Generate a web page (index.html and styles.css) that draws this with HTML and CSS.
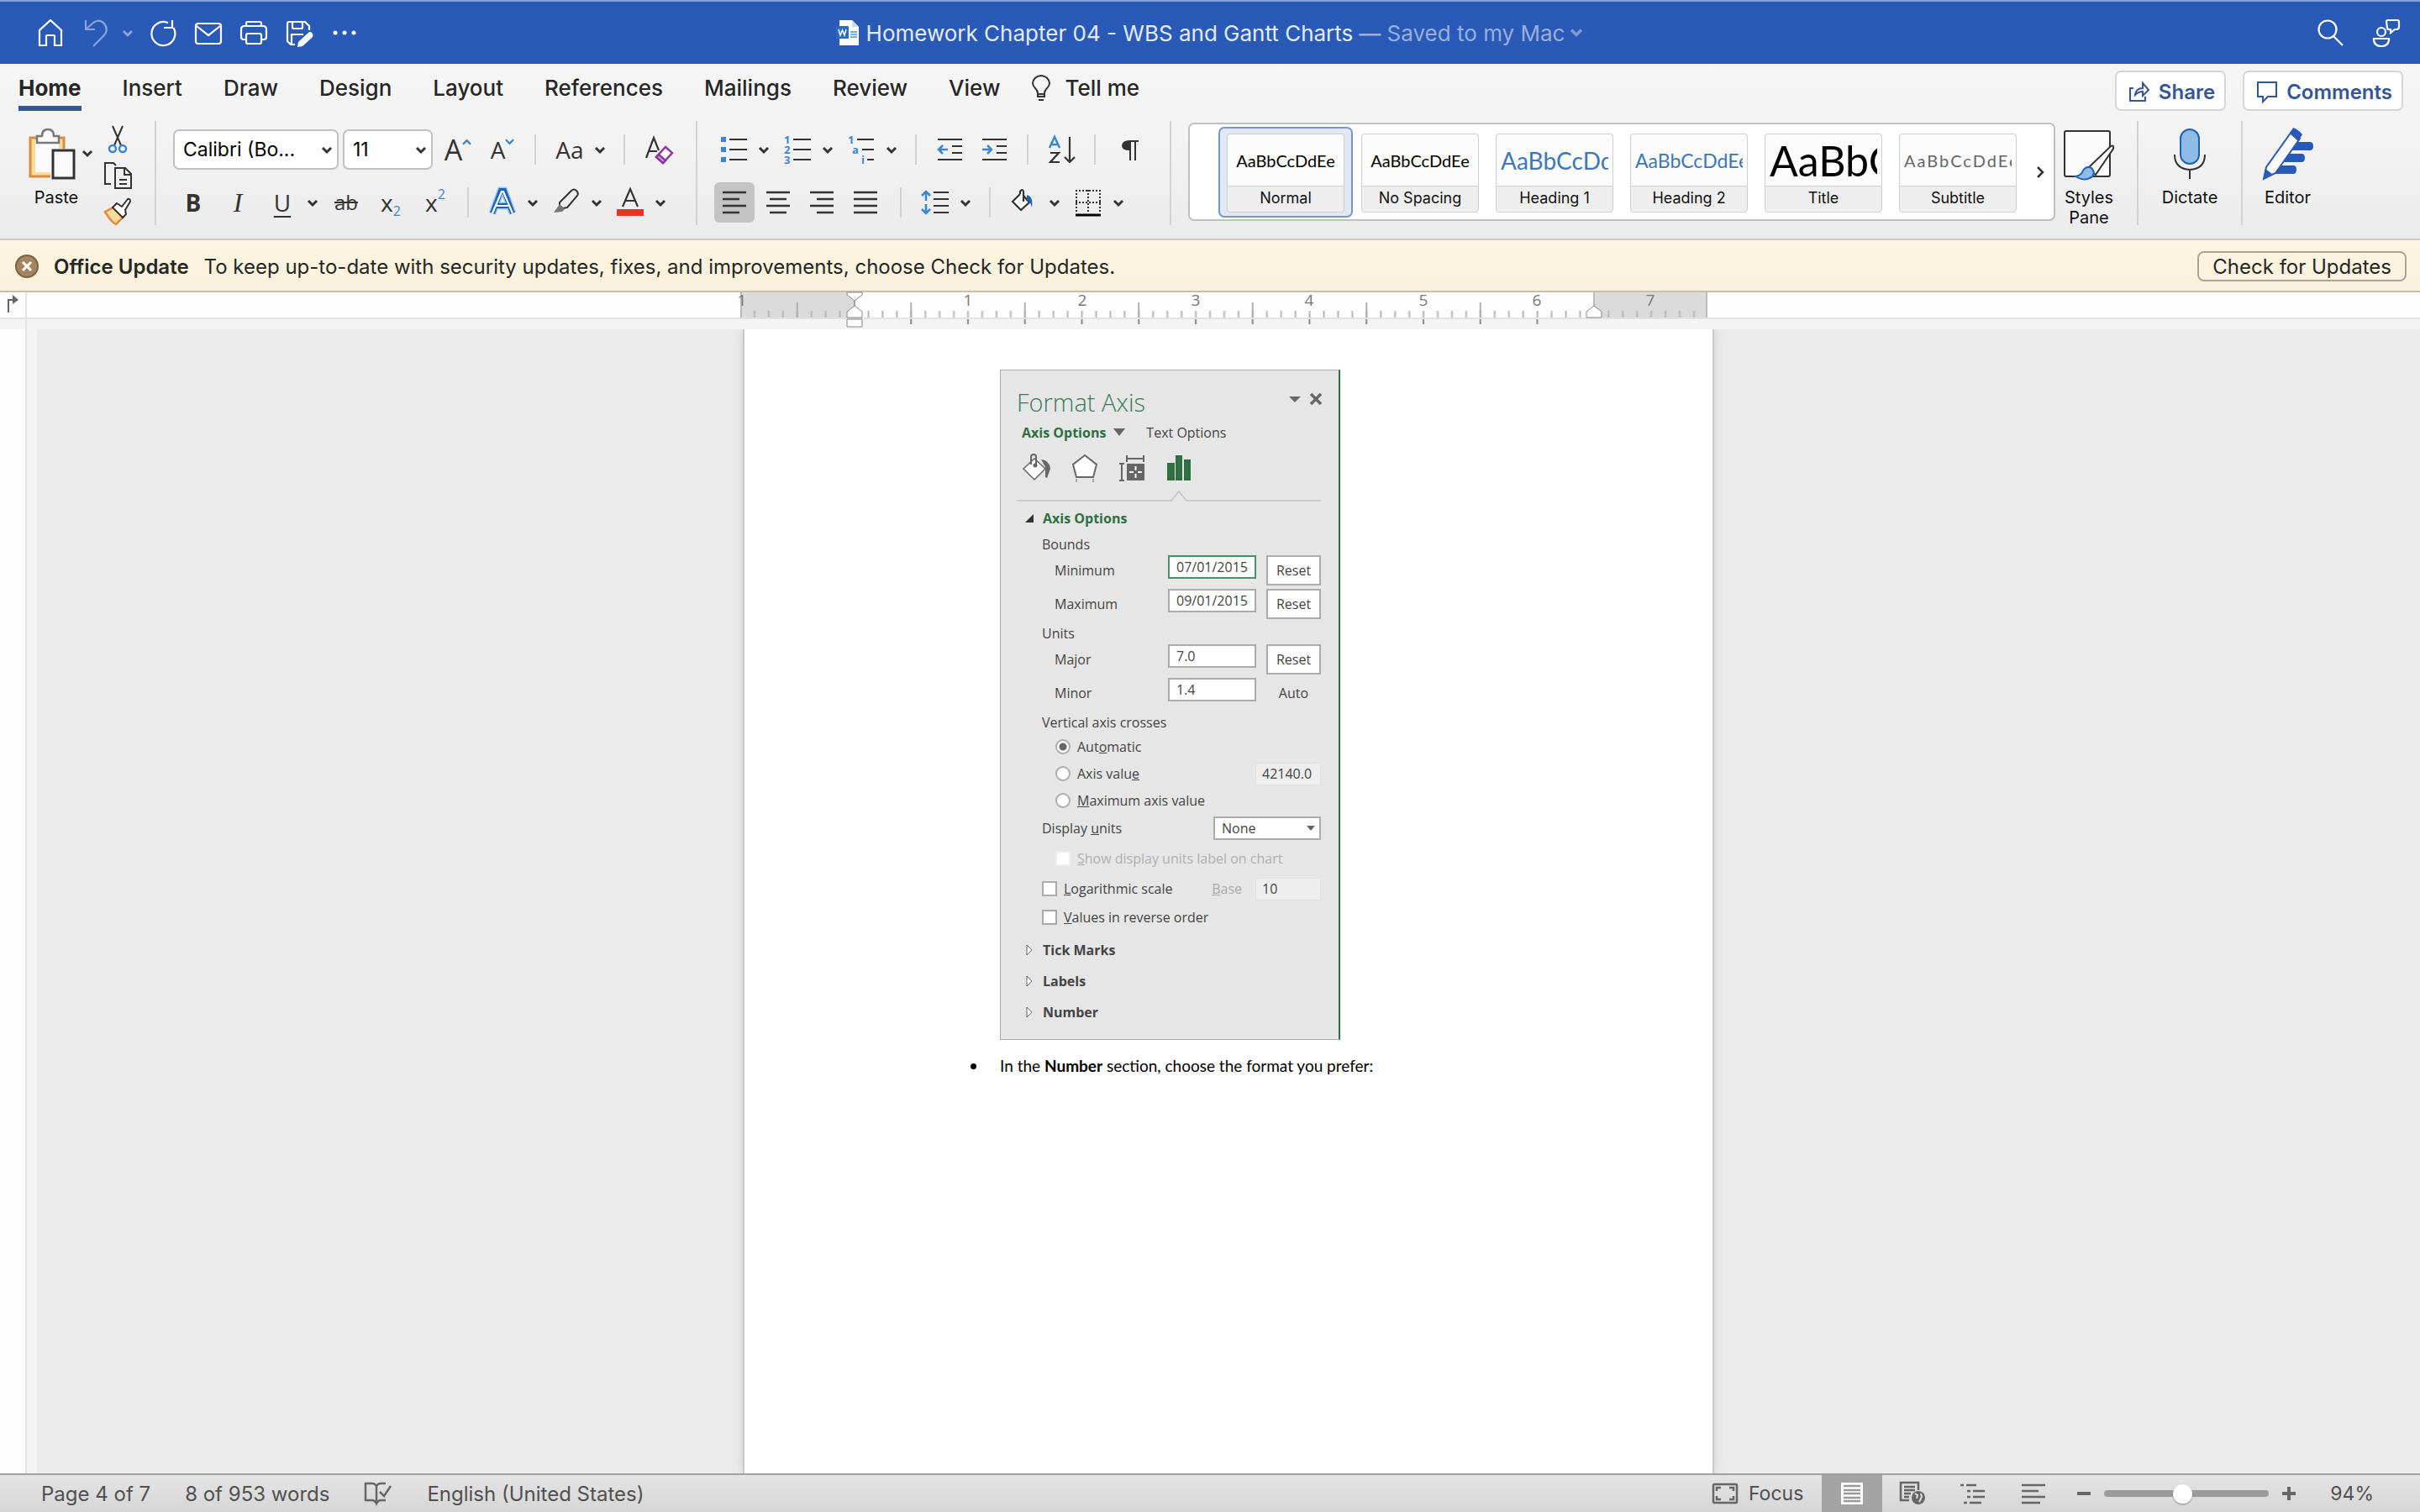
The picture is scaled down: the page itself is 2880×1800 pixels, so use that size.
FILE: index.html
```html
<!DOCTYPE html>
<html lang="en">
<head>
    <meta charset="UTF-8">
    <meta name="viewport" content="width=device-width, initial-scale=1.0">
    <title>Homework Chapter 04 - WBS and Gantt Charts</title>
    <link rel="stylesheet" href="styles.css">
</head>
<body>
    <svg class="defs" aria-hidden="true">
        <symbol id="chev" viewBox="0 0 14 10"><path d="M2 2l5 5 5-5" fill="none" stroke="currentColor" stroke-width="3"/></symbol>
    </svg>

    <header class="titlebar">
        <div class="quick">
            <button aria-label="Home"><svg viewBox="0 0 36 36"><path d="M5 33V15L18 3l13 12v18h-8V22q0-1-1-1h-8q-1 0-1 1v11z"/></svg></button>
            <button class="dim" aria-label="Undo"><svg viewBox="0 0 36 36"><path d="M6 3v11h11M6 14L15 6q7-5 13 1 6 8-1 15L15 34"/></svg></button>
            <button class="chev dim" aria-label="Undo list"><svg><use href="#chev"/></svg></button>
            <button aria-label="Redo"><svg viewBox="0 0 36 36"><path d="M24 6.200A14 14 0 1 0 30.500 12M29 3v9H19"/></svg></button>
            <button aria-label="Mail"><svg viewBox="0 0 36 36"><rect x="3" y="7" width="30" height="24" rx="3"/><path d="M4 10l14 11L32 10"/></svg></button>
            <button aria-label="Print"><svg viewBox="0 0 36 36"><path d="M9 10V7q0-2 2-2h14q2 0 2 2v3M9 26H6q-3 0-3-3v-9q0-4 4-4h22q4 0 4 4v9q0 3-3 3h-3"/><rect x="9" y="19" width="18" height="12" rx="2"/></svg></button>
            <button aria-label="Save"><svg viewBox="0 0 36 36"><path d="M13 32H8l-4-4V7q0-2 2-2h19l5 5v5M10 5v7q0 1 1 1h10q1 0 1-1V5M9 31V20h14"/><path d="M33 18q3 3 0 6L22 34l-6 1 1-6 12-11q2-2 4 0z" fill="#fff" stroke="none"/></svg></button>
            <button aria-label="More"><svg viewBox="0 0 36 36"><g fill="#fff" stroke="none"><circle cx="7" cy="18" r="2.500"/><circle cx="18" cy="18" r="2.500"/><circle cx="29" cy="18" r="2.500"/></g></svg></button>
        </div>
        <div class="doc-title">
            <svg class="doc-icon" viewBox="0 0 28 32"><path d="M4 1h15l8 8v22H4z" fill="#fff"/><path d="M19 1l8 8h-8z" fill="#d5dbe4"/><path d="M17 15h8M17 18h8M17 21h8" stroke="#4a8fd8" stroke-width="1.500"/><rect y="8" width="15" height="15" rx="1" fill="#2b6bc4"/><path d="M3 12l2 7 2.500-6 2.500 6 2-7" fill="none" stroke="#fff" stroke-width="1.500"/></svg>
            <span>Homework Chapter 04 - WBS and Gantt Charts</span>
            <span class="saved"><b>—</b> Saved to my Mac</span>
            <svg class="dim title-chev"><use href="#chev"/></svg>
        </div>
        <div class="account">
            <button aria-label="Search"><svg viewBox="0 0 36 36"><circle cx="15" cy="14" r="10.500"/><path d="M22 22l11 11"/></svg></button>
            <button aria-label="Presence"><svg viewBox="0 0 36 36"><circle cx="13" cy="17" r="5"/><path d="M4 25h18v2q-1 7-9 7t-9-7zM19 5q0-2 2-2h11q2 0 2 2v6q0 3-3 3h-2l-5 4v-4h-2q-2 0-2-2z"/></svg></button>
        </div>
    </header>

    <div class="ribbon">
        <nav class="tabs">
            <a href="#" class="active">Home</a>
            <a href="#">Insert</a>
            <a href="#">Draw</a>
            <a href="#">Design</a>
            <a href="#">Layout</a>
            <a href="#">References</a>
            <a href="#">Mailings</a>
            <a href="#">Review</a>
            <a href="#">View</a>
            <a href="#" class="tell"><svg viewBox="0 0 24 32"><path d="M8 22q0-3-3-6-3-3-3-6 1-8 10-9 9 1 10 9 0 3-3 6-3 3-3 6v4H8zM8 23h8M9 30h6" fill="none" stroke="#333" stroke-width="2"/></svg>Tell me</a>
            <div class="tab-actions">
                <button><svg viewBox="0 0 26 26"><path d="M6 9H2v15h18v-5M8 17q1-8 9-8V3l7 8-7 7v-5q-5 0-9 4z"/></svg>Share</button>
                <button><svg viewBox="0 0 26 26"><path d="M2 2h22v17H14l-6 6v-6H2z"/></svg>Comments</button>
            </div>
        </nav>

        <div class="tools">
            <div class="clipboard">
                <button class="big paste">
                    <svg viewBox="0 0 60 62"><path d="M5 12h40v46H5z" fill="#f8dc9c" stroke="#e08a3c" stroke-width="3"/><path d="M11 15h28v38H11z" fill="#fafafa"/><path d="M13 10h6q0-8 7-8t7 8h6v8H13z" fill="#fafafa" stroke="#777" stroke-width="2.500"/><path d="M29 25h29v37H29z" fill="#fafafa"/><path d="M32 27h25v33H32z" fill="#fafafa" stroke="#333" stroke-width="3"/></svg>
                    Paste
                </button>
                <button class="chev" aria-label="Paste options"><svg><use href="#chev"/></svg></button>
                <div class="stack">
                    <button aria-label="Cut"><svg viewBox="0 0 36 36"><path d="M12 2l10 23M24 2L14 25" stroke-width="2"/><g stroke="#3b87cd"><circle cx="12" cy="29" r="4"/><circle cx="24" cy="29" r="4"/></g></svg></button>
                    <button aria-label="Copy"><svg viewBox="0 0 36 36"><path d="M10 28H3V3h10l3 3M15 9h12l7 7v17H15zM26 9v8h8M20 23h9M20 28h9" stroke-width="2"/></svg></button>
                    <button aria-label="Format painter"><svg viewBox="0 0 36 36"><path d="M3 18l10-5 12 11-9 9q-6-3-13-15z" fill="#fbdc9a" stroke="#e08a3c"/><path d="M12 13l5-5 6 4 7-9q3-1 3 3l-6 10 1 5-4 4z" fill="#fff" stroke-width="2"/></svg></button>
                </div>
            </div>

            <div class="group font">
                <div class="row">
                    <div class="combos">
                        <div class="combo"><select class="face" aria-label="Font"><option>Calibri (Bo...</option></select><svg><use href="#chev"/></svg></div>
                        <div class="combo"><select class="size" aria-label="Font size"><option>11</option></select><svg><use href="#chev"/></svg></div>
                    </div>
                    <button class="glyph large" aria-label="Increase font size">A<svg class="mini" viewBox="0 0 12 8"><path d="M1 7l5-5 5 5" stroke="#3b87cd"/></svg></button>
                    <button class="glyph" aria-label="Decrease font size">A<svg class="mini" viewBox="0 0 12 8"><path d="M1 1l5 5 5-5" stroke="#3b87cd"/></svg></button>
                    <i class="sep"></i>
                    <button class="glyph" aria-label="Change case">Aa</button>
                    <button class="chev" aria-label="Case list"><svg><use href="#chev"/></svg></button>
                    <i class="sep"></i>
                    <button aria-label="Clear formatting"><svg viewBox="0 0 36 36"><path d="M3 28L12 4l6 15M6 20h10" stroke-width="2.200"/><path d="M26 15l8 7-11 12-8-7z" fill="#fff" stroke="#8a3aa0"/><path d="M18 24l8 7-3 3-8-7z" fill="#d9a3e4" stroke="#8a3aa0"/></svg></button>
                </div>
                <div class="row">
                    <button class="glyph bold">B</button>
                    <button class="glyph italic">I</button>
                    <button class="glyph under">U</button>
                    <button class="chev" aria-label="Underline list"><svg><use href="#chev"/></svg></button>
                    <button class="glyph strike">ab</button>
                    <button class="glyph script">x<sub>2</sub></button>
                    <button class="glyph script">x<sup>2</sup></button>
                    <i class="sep"></i>
                    <button aria-label="Text effects"><svg viewBox="0 0 36 36"><path d="M6 31L16 4h4l10 27M11 22h14" stroke="#9cc8ee" stroke-width="9"/><path d="M6 31L16 4h4l10 27M11 22h14" stroke="#1f62b4" stroke-width="6"/><path d="M6 31L17 5h2l11 26M11 22h14" stroke="#fff" stroke-width="2.200"/></svg></button>
                    <button class="chev" aria-label="Text effects list"><svg><use href="#chev"/></svg></button>
                    <button aria-label="Highlight"><svg viewBox="0 0 36 36"><path d="M10 18L24 4q3-3 6 0 3 3 1 6L19 24l-5 1-4-3z" stroke-width="2"/><path d="M10 20l6 6-3 3-10 1z" fill="#777" stroke="none"/></svg></button>
                    <button class="chev" aria-label="Highlight list"><svg><use href="#chev"/></svg></button>
                    <button aria-label="Font color"><svg viewBox="0 0 36 36"><path d="M9 23l9-21 9 21M12 16h12" stroke-width="2.200"/><path d="M2 26h32v8H2z" fill="#eb3223" stroke="none"/></svg></button>
                    <button class="chev" aria-label="Font color list"><svg><use href="#chev"/></svg></button>
                </div>
            </div>

            <div class="group para">
                <div class="row">
                    <button aria-label="Bullets"><svg viewBox="0 0 36 36"><path d="M13 6h21M13 18h21M13 30h21" stroke-width="2.200"/><path d="M3 3h6v6H3zM3 15h6v6H3zM3 27h6v6H3z" fill="#3b87cd" stroke="none"/></svg></button>
                    <button class="chev" aria-label="Bullets list"><svg><use href="#chev"/></svg></button>
                    <button aria-label="Numbering"><svg viewBox="0 0 36 36"><path d="M13 6h21M13 18h21M13 30h21" stroke-width="2.200"/><g class="num"><text x="2" y="11">1</text><text x="2" y="23">2</text><text x="2" y="35">3</text></g></svg></button>
                    <button class="chev" aria-label="Numbering list"><svg><use href="#chev"/></svg></button>
                    <button aria-label="Multilevel list"><svg viewBox="0 0 36 36"><path d="M13 6h20M19 18h14M25 30h8" stroke-width="2.200"/><g class="num"><text x="2" y="11">1</text><text x="7" y="23">a</text><text x="18" y="35">i</text></g></svg></button>
                    <button class="chev" aria-label="Multilevel styles"><svg><use href="#chev"/></svg></button>
                    <i class="sep"></i>
                    <button aria-label="Decrease indent"><svg viewBox="0 0 36 36"><path d="M3 6h29M20 14h12M20 22h12M3 30h29" stroke-width="2.200"/><path d="M15 18H4M9 13l-5 5 5 5" stroke="#3b87cd"/></svg></button>
                    <button aria-label="Increase indent"><svg viewBox="0 0 36 36"><path d="M3 6h29M20 14h12M20 22h12M3 30h29" stroke-width="2.200"/><path d="M3 18h11M9 13l5 5-5 5" stroke="#3b87cd"/></svg></button>
                    <i class="sep"></i>
                    <button aria-label="Sort"><svg viewBox="0 0 36 36"><path d="M3 16L9 3l6 13M5 12h8" stroke="#3b87cd"/><path d="M4 22h10L4 33h11M27 3v30M21 27l6 6 6-6" stroke-width="2.200"/></svg></button>
                    <i class="sep"></i>
                    <button aria-label="Show marks"><svg viewBox="0 0 36 36"><path d="M18 19q-9 0-9-6 1-6 9-6h11v2h-3v22h-2V9h-4v22h-2z" fill="#333" stroke="none"/></svg></button>
                </div>
                <div class="row">
                    <div class="aligns">
                        <button class="on" aria-label="Align left"><svg viewBox="0 0 36 36"><path d="M4 6h28M4 14h20M4 22h28M4 30h20"/></svg></button>
                        <button aria-label="Center"><svg viewBox="0 0 36 36"><path d="M4 6h28M8 14h20M4 22h28M8 30h20"/></svg></button>
                        <button aria-label="Align right"><svg viewBox="0 0 36 36"><path d="M4 6h28M12 14h20M4 22h28M12 30h20"/></svg></button>
                        <button aria-label="Justify"><svg viewBox="0 0 36 36"><path d="M4 6h28M4 14h28M4 22h28M4 30h28"/></svg></button>
                    </div>
                    <i class="sep"></i>
                    <button aria-label="Line spacing"><svg viewBox="0 0 36 36"><path d="M16 6h18M16 14h18M16 22h18M16 30h18" stroke-width="2.200"/><path d="M7 16V5M2 10l5-5 5 5M7 20v11M2 26l5 5 5-5" stroke="#3b87cd"/></svg></button>
                    <button class="chev" aria-label="Spacing list"><svg><use href="#chev"/></svg></button>
                    <i class="sep"></i>
                    <button aria-label="Shading"><svg viewBox="0 0 36 36"><path d="M13 8L4 17l10 10 10-9-7-8V5q-1-4-4 0v3M17 10v7" fill="#fafafa" stroke-width="2.200"/><path d="M21 9q8 2 6 15-1-6-6-9z" fill="#1f62b4" stroke="none"/></svg></button>
                    <button class="chev" aria-label="Shading list"><svg><use href="#chev"/></svg></button>
                    <button aria-label="Borders"><svg viewBox="0 0 36 36"><path d="M3 4h30M3 18h30M4 3v28M18 3v28M32 3v28" stroke-dasharray="2 2" stroke-width="2"/><path d="M3 33h30" stroke="#000" stroke-width="3"/></svg></button>
                    <button class="chev" aria-label="Borders list"><svg><use href="#chev"/></svg></button>
                </div>
            </div>

            <div class="group styles">
                <div class="gallery">
                    <button class="tile selected"><span class="preview">AaBbCcDdEe</span><span class="name">Normal</span></button>
                    <button class="tile"><span class="preview">AaBbCcDdEe</span><span class="name">No Spacing</span></button>
                    <button class="tile"><span class="preview h1">AaBbCcDd</span><span class="name">Heading 1</span></button>
                    <button class="tile"><span class="preview h2">AaBbCcDdEe</span><span class="name">Heading 2</span></button>
                    <button class="tile"><span class="preview title">AaBbC</span><span class="name">Title</span></button>
                    <button class="tile"><span class="preview subtitle">AaBbCcDdEe</span><span class="name">Subtitle</span></button>
                    <button class="more" aria-label="More styles"><svg viewBox="0 0 10 14"><path d="M2 1l6 6-6 6" fill="none" stroke="#333" stroke-width="2.500"/></svg></button>
                </div>
                <button class="big">
                    <svg viewBox="0 0 60 62"><rect x="1" y="4" width="54" height="54" rx="2" fill="#fafafa" stroke="#333" stroke-width="2"/><path d="M27 50l29-28q4-2 3 3L38 56z" fill="#fafafa" stroke="#333" stroke-width="2"/><path d="M14 58q7-1 9-7 4-6 10-3 5 5 1 10-8 7-20 0z" fill="#8fbce6" stroke="#1f62b4" stroke-width="2"/></svg>
                    Styles<br>Pane
                </button>
            </div>
            <div class="group"><button class="big">
                <svg viewBox="0 0 60 62"><rect x="19" y="2" width="22" height="41" rx="11" fill="#8fbce6" stroke="#1f62b4" stroke-width="2"/><path d="M12 32q0 17 18 18 18-1 18-18M30 50v11" fill="none" stroke="#333" stroke-width="2"/></svg>
                Dictate
            </button></div>
            <div class="group"><button class="big">
                <svg viewBox="0 0 60 62"><path d="M30 17h26q4 0 4 5t-4 5H26zM22 31h24q4 0 4 5t-4 5H18zM14 45h22q4 0 4 5t-4 5H10z" fill="#2a5ab7"/><path d="M1 61l3-14L34 5l10 8-29 41z" fill="#fafafa" stroke="#2a5ab7" stroke-width="2"/><path d="M1 61l2-12 8 6zM32 7l4-7q6 2 11 8l-5 8z" fill="#2a5ab7"/></svg>
                Editor
            </button></div>
        </div>
    </div>

    <div class="update">
        <button class="dismiss" aria-label="Dismiss"><svg viewBox="0 0 28 28"><circle cx="14" cy="14" r="13" fill="#a38360" stroke="#7d6242" stroke-width="2"/><path d="M9 9l10 10M19 9L9 19" stroke="#fff" stroke-width="3"/></svg></button>
        <b>Office Update</b>
        <span>To keep up-to-date with security updates, fixes, and improvements, choose Check for Updates.</span>
        <button class="check">Check for Updates</button>
    </div>

    <div class="ruler">
        <div class="corner"><svg viewBox="0 0 16 24"><path d="M3 22V7h7" fill="none" stroke="#666" stroke-width="2"/><path d="M8 1l7 6-7 5z" fill="#666"/></svg></div>
        <div class="track">
            <svg viewBox="0 0 1150 44" width="1150" height="44">
                <defs>
                    <pattern id="eighths" x="-8.500" y="0" width="16.940" height="44" patternUnits="userSpaceOnUse"><path d="M8.500 22v8" stroke="#b5b5b5" stroke-width="2"/></pattern>
                    <pattern id="inches" x="0" y="0" width="135.500" height="44" patternUnits="userSpaceOnUse"><path d="M67.750 12v18" stroke="#b0b0b0" stroke-width="2"/></pattern>
                    <pattern id="halves" x="-34" y="0" width="67.750" height="44" patternUnits="userSpaceOnUse"><path d="M34 32v6" stroke="#888" stroke-width="2"/></pattern>
                </defs>
                <path d="M0 0h136v30H0zM1017 0h134v30h-134z" fill="#dbdbdb"/>
                <path d="M1 0v30M1016 0v30M1150 0v30" stroke="#bbb" stroke-width="2"/>
                <rect x="10" width="1130" height="44" fill="url(#eighths)"/>
                <rect width="950" height="44" fill="url(#inches)"/>
                <rect x="190" width="765" height="44" fill="url(#halves)"/>
                <g class="marks"><text x="2" y="16">1</text><text x="271" y="16">1</text><text x="407" y="16">2</text><text x="542" y="16">3</text><text x="677" y="16">4</text><text x="813" y="16">5</text><text x="948" y="16">6</text><text x="1083" y="16">7</text></g>
                <path d="M127 0h18v3l-9 7-9-7zM136 10v6l9 7v7h-18v-7l9-7zM127 32h18v9h-18zM1016 16l9 7v7h-18v-7z" fill="#fff" stroke="#888"/>
            </svg>
        </div>
    </div>

    <main class="workspace">
        <div class="vruler"></div>
        <div class="canvas">
            <article class="page">
                <section class="pane">
                    <header><h2>Format Axis</h2><svg class="pane-btns" viewBox="0 0 40 16"><path d="M0 5h14l-7 7z" fill="#666"/><path d="M26 2l12 12M38 2L26 14" stroke="#666" stroke-width="3.500"/></svg></header>
                    <div class="pane-tabs"><b>Axis Options</b><svg viewBox="0 0 14 10"><path d="M0 0h14L7 9z" fill="#666"/></svg><span>Text Options</span></div>
                    <div class="pane-icons">
                        <svg viewBox="0 0 34 34"><path d="M14 5L1 17l13 13 13-13z" fill="#fff" stroke="#666" stroke-width="1.500"/><path d="M10 12V3q0-3 3-3t3 3v10" fill="none" stroke="#666" stroke-width="2"/><circle cx="15" cy="13" r="2.500" fill="#666"/><path d="M22 6q10 1 11 11l-4 11-2-1V15z" fill="#666"/></svg>
                        <svg viewBox="0 0 34 34"><path d="M17 1L3 12l4 15h20l4-15z" fill="#fff" stroke="#666" stroke-width="2"/><path d="M7 29v4M27 29v4" stroke="#aaa" stroke-width="2"/></svg>
                        <svg viewBox="0 0 34 34"><path d="M4 11v20M1 11h6M1 31h6M10 5h20M10 1v8M30 1v8" stroke="#666" stroke-width="2"/><path d="M10 11h21v20H10z" fill="#666"/><path d="M13 21h5M23 21h5M20.500 14v5M20.500 23v5" stroke="#fff" stroke-width="2"/></svg>
                        <svg viewBox="0 0 34 34"><path d="M1 10h9v21H1zM11 1h8v30h-8zM21 6h8v25h-8z" fill="#2f6f42"/></svg>
                    </div>
                    <svg class="notch" viewBox="0 0 364 14"><path d="M0 12h185l9-11 9 11h161" fill="none" stroke="#c3c3c3" stroke-width="1.500"/></svg>
                    <h3 class="open"><svg viewBox="0 0 10 10"><path d="M10 0v10H0z" fill="#333"/></svg>Axis Options</h3>
                    <p class="label">Bounds</p>
                    <div class="field"><label for="min">Minimum</label><input id="min" class="focus" value="07/01/2015"><button>Reset</button></div>
                    <div class="field"><label for="max">Maximum</label><input id="max" value="09/01/2015"><button>Reset</button></div>
                    <p class="label">Units</p>
                    <div class="field"><label for="major">Major</label><input id="major" value="7.0"><button>Reset</button></div>
                    <div class="field"><label for="minor">Minor</label><input id="minor" value="1.4"><span>Auto</span></div>
                    <p class="label">Vertical axis crosses</p>
                    <div class="option sub"><input type="radio" name="cross" id="auto" checked><label for="auto">Aut<u>o</u>matic</label></div>
                    <div class="option sub"><input type="radio" name="cross" id="value"><label for="value">Axis valu<u>e</u></label><input class="off" value="42140.0" aria-label="Axis value" disabled></div>
                    <div class="option sub"><input type="radio" name="cross" id="maxv"><label for="maxv"><u>M</u>aximum axis value</label></div>
                    <div class="option"><label for="units">Display <u>u</u>nits</label><div class="combo units"><select id="units"><option>None</option></select><svg viewBox="0 0 10 6"><path d="M0 0h10L5 6z" fill="#666"/></svg></div></div>
                    <div class="option sub faded"><input type="checkbox" id="show" disabled><label for="show"><u>S</u>how display units label on chart</label></div>
                    <div class="option"><input type="checkbox" id="log"><label for="log"><u>L</u>ogarithmic scale</label><label class="base" for="base"><u>B</u>ase</label><input class="off" id="base" value="10" disabled></div>
                    <div class="option"><input type="checkbox" id="rev"><label for="rev"><u>V</u>alues in reverse order</label></div>
                    <h3><svg viewBox="0 0 10 14"><path d="M2 1l6 6-6 6z" fill="#fff" stroke="#666"/></svg>Tick Marks</h3>
                    <h3><svg viewBox="0 0 10 14"><path d="M2 1l6 6-6 6z" fill="#fff" stroke="#666"/></svg>Labels</h3>
                    <h3><svg viewBox="0 0 10 14"><path d="M2 1l6 6-6 6z" fill="#fff" stroke="#666"/></svg>Number</h3>
                </section>
                <ul>
                    <li>In the <b>Number</b> section, choose the format you prefer:</li>
                </ul>
            </article>
        </div>
    </main>

    <footer class="status">
        <span>Page 4 of 7</span>
        <span>8 of 953 words</span>
        <svg class="proof" viewBox="0 0 34 28"><path d="M15 5q-2-3-5-3H2v20h8q3 0 5 4 2-4 5-4h6M15 5v20M15 5q2-3 5-3h6M19 12l5 5 8-12"/></svg>
        <span>English (United States)</span>
        <div class="views">
            <button class="focus-mode"><svg viewBox="0 0 30 24"><rect x="1" y="1" width="28" height="22" rx="1"/><path d="M5 9V5h5M20 5h5v4M25 15v4h-5M10 19H5v-4"/></svg>Focus</button>
            <button class="view on" aria-label="Print layout"><svg viewBox="0 0 34 28"><path d="M4 1h26v26H4z" fill="#fff" stroke="none"/><path d="M7 5h20M7 10h20M7 14h20M7 19h20M7 23h20" stroke="#999"/></svg></button>
            <button class="view" aria-label="Web layout"><svg viewBox="0 0 34 28"><path d="M13 22H3V1h21v9M7 6h13M7 10h13M7 14h8M7 18h6"/><circle cx="24" cy="19" r="8" fill="#666" stroke="none"/><path d="M20 14l3 2-1 4M27 14l1 4-3 6" stroke="#ddd" stroke-width="2"/></svg></button>
            <button class="view" aria-label="Outline"><svg viewBox="0 0 34 28"><path d="M2 4h4M9 4h12M10 11h4M17 11h14M10 18h4M17 18h14M6 25h4M13 25h14"/></svg></button>
            <button class="view" aria-label="Draft"><svg viewBox="0 0 34 28"><path d="M3 4h28M3 11h20M3 18h28M3 25h22"/></svg></button>
            <button class="step" aria-label="Zoom out"><svg viewBox="0 0 16 16"><path d="M0 8h16"/></svg></button>
            <input type="range" min="0" max="200" value="94" aria-label="Zoom">
            <button class="step" aria-label="Zoom in"><svg viewBox="0 0 16 16"><path d="M0 8h16M8 0v16"/></svg></button>
            <span>94%</span>
        </div>
    </footer>
</body>
</html>
```
FILE: styles.css
```css
* {
    box-sizing: border-box;
}
body {
    margin: 0;
    min-height: 100vh;
    display: flex;
    flex-direction: column;
    font-family: Inter, "Liberation Sans", sans-serif;
    font-size: 24px;
    color: #262626;
    background: #ebebeb;
}
button {
    padding: 0;
    border: none;
    background: none;
    font: inherit;
    color: inherit;
    flex: none;
}
svg {
    display: block;
    flex: none;
    overflow: visible;
}
.defs {
    position: absolute;
    width: 0;
    height: 0;
}

/* title bar */
.titlebar {
    display: grid;
    grid-template-columns: 1fr auto 1fr;
    align-items: center;
    height: 76px;
    border-top: 2px solid #87a3d8;
    background: #2a5ab7;
    color: #fff;
}
.titlebar button svg {
    width: 36px;
    height: 36px;
    fill: none;
    stroke: #fff;
    stroke-width: 2.2;
}
.quick {
    display: flex;
    align-items: center;
    gap: 18px;
    padding-left: 42px;
}
.chev {
    width: 20px;
    height: 36px;
    margin: 0 -5px 0 -9px;
}
.quick .chev {
    margin: 0 -4px 0 -8px;
}
.chev svg, .titlebar .chev svg {
    width: 14px;
    height: 10px;
    margin: 2px auto 0;
    stroke: none;
}
.dim {
    opacity: 0.45;
}
.doc-title {
    display: flex;
    align-items: center;
    color: #e4ebf7;
    font-size: 26px;
}
.doc-icon {
    width: 28px;
    height: 32px;
    margin-right: 8px;
}
.saved {
    margin-left: 7px;
    color: #98afdc;
}
.saved b {
    font-weight: 500;
}
.title-chev {
    width: 18px;
    height: 12px;
    margin-left: 5px;
}
.account {
    display: flex;
    justify-content: flex-end;
    gap: 30px;
    padding-right: 23px;
}

/* ribbon */
.ribbon {
    height: 210px;
    border-bottom: 2px solid #c8c8c8;
    background: linear-gradient(#f6f6f6, #f2f2f2 50%, #ebebeb);
}
.tabs {
    display: flex;
    align-items: flex-start;
    gap: 49px;
    height: 68px;
    padding: 8px 20px 0 22px;
    font-size: 26px;
    font-weight: 500;
}
.tabs a {
    height: 48px;
    line-height: 42px;
    color: inherit;
    text-decoration: none;
}
.tabs .active {
    font-weight: 700;
    border-bottom: 6px solid #345697;
}
.tabs .tell {
    display: flex;
    gap: 16px;
    margin-left: -12px;
}
.tell svg {
    width: 24px;
    height: 32px;
    margin-top: 5px;
}
.tab-actions {
    display: flex;
    gap: 20px;
    margin-left: auto;
}
.tab-actions button {
    display: flex;
    align-items: center;
    gap: 10px;
    height: 48px;
    padding: 2px 11px 0 14px;
    border: 2px solid #d6d6d6;
    border-radius: 7px;
    background: #fff;
    color: #345697;
    font-weight: 600;
    font-size: 24px;
}
.tab-actions svg {
    width: 26px;
    height: 26px;
    fill: none;
    stroke: #345697;
    stroke-width: 2;
}
.tools {
    display: flex;
    height: 124px;
    font-size: 20px;
    color: #333;
}
.big {
    display: flex;
    flex-direction: column;
    align-items: center;
    height: 124px;
    padding-top: 8px;
    font-size: 20px;
    line-height: 24px;
    color: #111;
}
.big svg {
    width: 60px;
    height: 62px;
    margin-bottom: 9px;
}
.clipboard {
    display: flex;
    width: 184px;
    padding-left: 32px;
}
.paste {
    width: 70px;
}
.paste svg {
    margin-right: 12px;
}
.clipboard .chev {
    margin: 20px 8px 0 -8px;
}
.stack {
    display: flex;
    flex-direction: column;
    gap: 7px;
    padding-top: 4px;
}
.group {
    display: flex;
    border-left: 2px solid #d2d2d2;
}
.font, .para {
    flex-direction: column;
}
.font {
    width: 644px;
    padding-left: 20px;
}
.para {
    width: 564px;
    padding-left: 20px;
}
.row {
    display: flex;
    align-items: center;
    gap: 17px;
    height: 60px;
    margin-top: 4px;
}
.row + .row {
    margin: 7px 0 0;
    height: 52px;
}
.font .row + .row {
    padding-left: 6px;
}
.para .row:first-child {
    padding-left: 5px;
}
.sep {
    width: 2px;
    height: 36px;
    margin: 0 5px 0 3px;
    background: #d2d2d2;
}
.chev + .sep {
    margin-left: 6px;
}
.row button:not(.chev), .stack button {
    width: 36px;
    height: 36px;
}
.row button > svg, .stack svg {
    fill: none;
    stroke: #333;
    stroke-width: 2.5;
}
.row .chev svg {
    stroke: none;
}
.combos {
    display: flex;
    gap: 5px;
    margin-right: -5px;
}
.combo {
    position: relative;
}
.combo svg {
    position: absolute;
    right: 7px;
    top: 20px;
    width: 14px;
    height: 10px;
}
.combo select {
    appearance: none;
    display: block;
    height: 48px;
    padding: 0 10px;
    border: 2px solid #c0c0c0;
    border-radius: 7px;
    background: #fff;
    color: #000;
    font: 23px Inter, "Liberation Sans", sans-serif;
}
.combo .face {
    width: 197px;
}
.combo .size {
    width: 107px;
}
.row .glyph {
    display: flex;
    align-items: center;
    justify-content: center;
    font: 28px "Open Sans", sans-serif;
    line-height: 36px;
}
.row .large {
    font-size: 34px;
}
.glyph .mini {
    width: 11px;
    height: 8px;
    margin-bottom: 18px;
    stroke-width: 2.5;
}
.row .bold {
    font-weight: 700;
}
.row .italic {
    font-family: "Liberation Serif", serif;
    font-size: 32px;
    font-style: italic;
}
.under {
    text-decoration: underline 2px;
    text-underline-offset: 5px;
}
.row .strike {
    font-size: 24px;
    text-decoration: line-through 2px;
}
.script sub, .script sup {
    font-size: 16px;
    line-height: 16px;
    color: #3b87cd;
}
.script sub {
    margin-top: 20px;
}
.script sup {
    margin-bottom: 20px;
}
.num text {
    font: 700 13px "Open Sans", sans-serif;
    fill: #3b87cd;
    stroke: none;
}
.aligns {
    display: flex;
    gap: 4px;
    margin-right: -3px;
}
.row .aligns button {
    width: 48px;
    height: 48px;
    border-radius: 6px;
}
.aligns svg {
    width: 36px;
    height: 36px;
    margin: auto;
}
.aligns .on {
    background: #c4c4c4;
}

/* styles gallery */
.styles {
    flex: 1;
    padding-left: 20px;
    gap: 10px;
}
.gallery {
    display: flex;
    flex: 1;
    align-items: center;
    height: 117px;
    margin-top: 2px;
    padding-left: 34px;
    border: 2px solid #c0c0c0;
    border-radius: 7px;
    background: #fff;
}
.tile {
    width: 160px;
    height: 108px;
    padding: 6px 8px;
    border: 2px solid transparent;
    border-radius: 7px;
}
.selected {
    border-color: #7896c9;
    background: #e1e8f3;
}
.preview, .name {
    display: block;
    border: 1px solid #cfcfcf;
}
.preview {
    height: 62px;
    padding: 0 5px;
    overflow: clip;
    overflow-clip-margin: content-box;
    white-space: nowrap;
    border-bottom: none;
    border-radius: 4px 4px 0 0;
    background: #fcfcfc;
    color: #000;
    font: 20px/62px Lato, sans-serif;
}
.name {
    height: 32px;
    border-radius: 0 0 4px 4px;
    background: #eee;
    color: #111;
    font-size: 18px;
    line-height: 28px;
}
.preview.h1, .preview.h2, .preview.title, .preview.subtitle {
    text-align: left;
}
.preview.h1 {
    color: #3c77b8;
    font-size: 28px;
}
.preview.h2 {
    color: #3c77b8;
    font-size: 23px;
}
.preview.title {
    font-size: 50px;
}
.preview.subtitle {
    color: #666;
    font-size: 20px;
    letter-spacing: 2px;
}
.more {
    margin-left: auto;
    padding: 0 11px;
}
.more svg {
    width: 10px;
    height: 14px;
}
.styles .big {
    width: 60px;
    margin-right: 27px;
}
.group:not(.styles) > .big {
    width: 122px;
}
.group:last-child > .big {
    margin-right: 104px;
    width: 107px;
}

/* update bar */
.update {
    display: flex;
    align-items: center;
    gap: 18px;
    height: 62px;
    padding: 2px 16px 0 18px;
    border-bottom: 2px solid #c5c0a9;
    background: linear-gradient(#fff6e1, #f8f0dc);
}
.update b {
    font-weight: 600;
}
.dismiss svg {
    width: 28px;
    height: 28px;
}
.check {
    height: 36px;
    margin-left: auto;
    padding: 0 16px;
    border: 2px solid #aaa498;
    border-radius: 8px;
}

/* rulers */
.ruler {
    display: flex;
    height: 44px;
    background: linear-gradient(#fdfdfd 30px, #e2e2e2 30px, #e2e2e2 32px, #f4f4f4 32px);
}
.corner {
    width: 32px;
    border-right: 2px solid #e4e4e4;
}
.corner svg {
    width: 16px;
    height: 24px;
    margin: 2px 0 0 7px;
}
.track {
    flex: 1;
}
.track svg {
    margin: 0 auto;
}
.marks text {
    font: 19px "Open Sans", sans-serif;
    fill: #777;
    text-anchor: middle;
}
.workspace {
    flex: 1;
    display: flex;
}
.vruler {
    width: 44px;
    background: linear-gradient(90deg, #fdfdfd 30px, #e4e4e4 30px, #e4e4e4 32px, #f4f4f4 32px);
}
.canvas {
    flex: 1;
    display: flex;
    justify-content: center;
}

/* document */
.page {
    width: 1156px;
    padding: 48px 0 0 304px;
    border: solid #c8c8c8;
    border-width: 0 2px;
    background: #fff;
    box-shadow: 0 0 12px #d0d0d0;
    clip-path: inset(0 -12px);
}
.page ul {
    margin: 15px 0 0 -14px;
    padding: 0;
    color: #000;
    font: 19px/30px Lato, sans-serif;
}
.page li {
    padding-left: 14px;
}
.page li::marker {
    font-size: 22px;
}
.pane {
    width: 405px;
    padding: 19px 21px 14px 19px;
    border: 1px solid #aaa;
    border-right: 2px solid #2f6f42;
    background: #e6e6e6;
    color: #444;
    font: 16px/26px "Open Sans", sans-serif;
}
.pane header {
    display: flex;
    align-items: center;
    justify-content: space-between;
    height: 38px;
    margin-bottom: 2px;
}
.pane h2 {
    margin: 0;
    color: #3b7a5c;
    font-size: 29px;
    font-weight: 300;
}
.pane-btns {
    width: 40px;
    height: 16px;
    margin: 0 -2px 8px 0;
}
.pane-tabs {
    display: flex;
    align-items: center;
    height: 30px;
    padding-left: 6px;
}
.pane b {
    color: #2f6f42;
}
.pane-tabs svg {
    width: 14px;
    height: 10px;
    margin: 0 25px 0 9px;
}
.pane-icons {
    display: flex;
    gap: 23px;
    height: 54px;
    padding: 11px 0 0 7px;
}
.pane-icons svg {
    width: 34px;
    height: 34px;
}
.notch {
    width: 100%;
    height: 14px;
}
.pane h3 {
    display: flex;
    align-items: center;
    gap: 11px;
    height: 37px;
    margin: 0;
    padding-left: 10px;
    font-size: 16px;
}
.pane h3 svg {
    width: 10px;
}
.pane .open {
    color: #2f6f42;
}
.label {
    margin: 0;
    padding-left: 30px;
}
.field {
    display: flex;
    align-items: flex-start;
    height: 40px;
    padding-left: 45px;
    line-height: 36px;
}
.field label {
    flex: 1;
}
.pane input, .pane button, .pane select {
    border: 2px solid #ababab;
    border-radius: 0;
    background: #fff;
    color: #444;
    font: 16px "Open Sans", sans-serif;
}
.field input {
    width: 105px;
    height: 28px;
    padding: 0 8px;
}
.field .focus {
    border-color: #4f8f68;
}
.field button, .field span {
    width: 65px;
    height: 36px;
    margin-left: 12px;
    text-align: center;
}
.option {
    display: flex;
    align-items: center;
    gap: 8px;
    height: 34px;
    padding-left: 30px;
}
.sub {
    height: 32px;
    padding-left: 46px;
}
.option.faded {
    height: 38px;
    color: #b0b0b0;
}
.pane input[type="radio"], .pane input[type="checkbox"] {
    appearance: none;
    width: 18px;
    height: 18px;
    margin: 0;
}
.pane input[type="radio"] {
    border-radius: 9px;
}
.pane input[type="radio"]:checked {
    background: radial-gradient(#666 4px, #fff 5px);
}
.pane input[type="checkbox"]:disabled {
    border-color: #eee;
}
.pane .off {
    width: 78px;
    height: 27px;
    margin-left: auto;
    padding: 0 7px;
    border: 1px solid #e0e0e0;
    background: #eee;
}
.base {
    margin-left: auto;
    color: #aaa;
}
.base + .off {
    margin-left: 8px;
}
.option + h3 {
    margin-top: 3px;
}
.units {
    margin-left: auto;
}
.units select {
    width: 128px;
    height: 28px;
    padding: 0 8px;
}
.units svg {
    top: 11px;
    width: 10px;
    height: 6px;
}

/* status bar */
.status {
    display: flex;
    align-items: center;
    height: 46px;
    padding-left: 49px;
    gap: 41px;
    border-top: 2px solid #a0a0a0;
    background: linear-gradient(#e4e4e4, #d6d6d6);
    color: #505050;
    font-size: 24px;
}
.status svg {
    fill: none;
    stroke: #666;
    stroke-width: 2.5;
}
.proof {
    width: 34px;
    height: 28px;
}
.views {
    display: flex;
    align-items: center;
    height: 44px;
    margin-left: auto;
    padding-right: 55px;
    font-size: 23px;
}
.focus-mode {
    display: flex;
    align-items: center;
    gap: 13px;
    margin-right: 22px;
}
.focus-mode svg {
    width: 30px;
    height: 24px;
}
.view {
    width: 72px;
    height: 44px;
}
.view.on {
    background: #a3a3a3;
}
.view svg {
    width: 34px;
    height: 28px;
    margin: auto;
}
.step {
    margin: 0 16px;
}
.step svg {
    width: 16px;
    height: 16px;
    stroke-width: 4;
}
.views .step:last-of-type {
    margin-right: 41px;
}
.views input {
    appearance: none;
    width: 196px;
    height: 8px;
    margin: 0;
    border-radius: 4px;
    background: #9b9b9b;
}
.views input::-webkit-slider-thumb {
    appearance: none;
    width: 23px;
    height: 23px;
    border-radius: 50%;
    background: #fff;
    box-shadow: 0 1px 2px #888;
}
```
